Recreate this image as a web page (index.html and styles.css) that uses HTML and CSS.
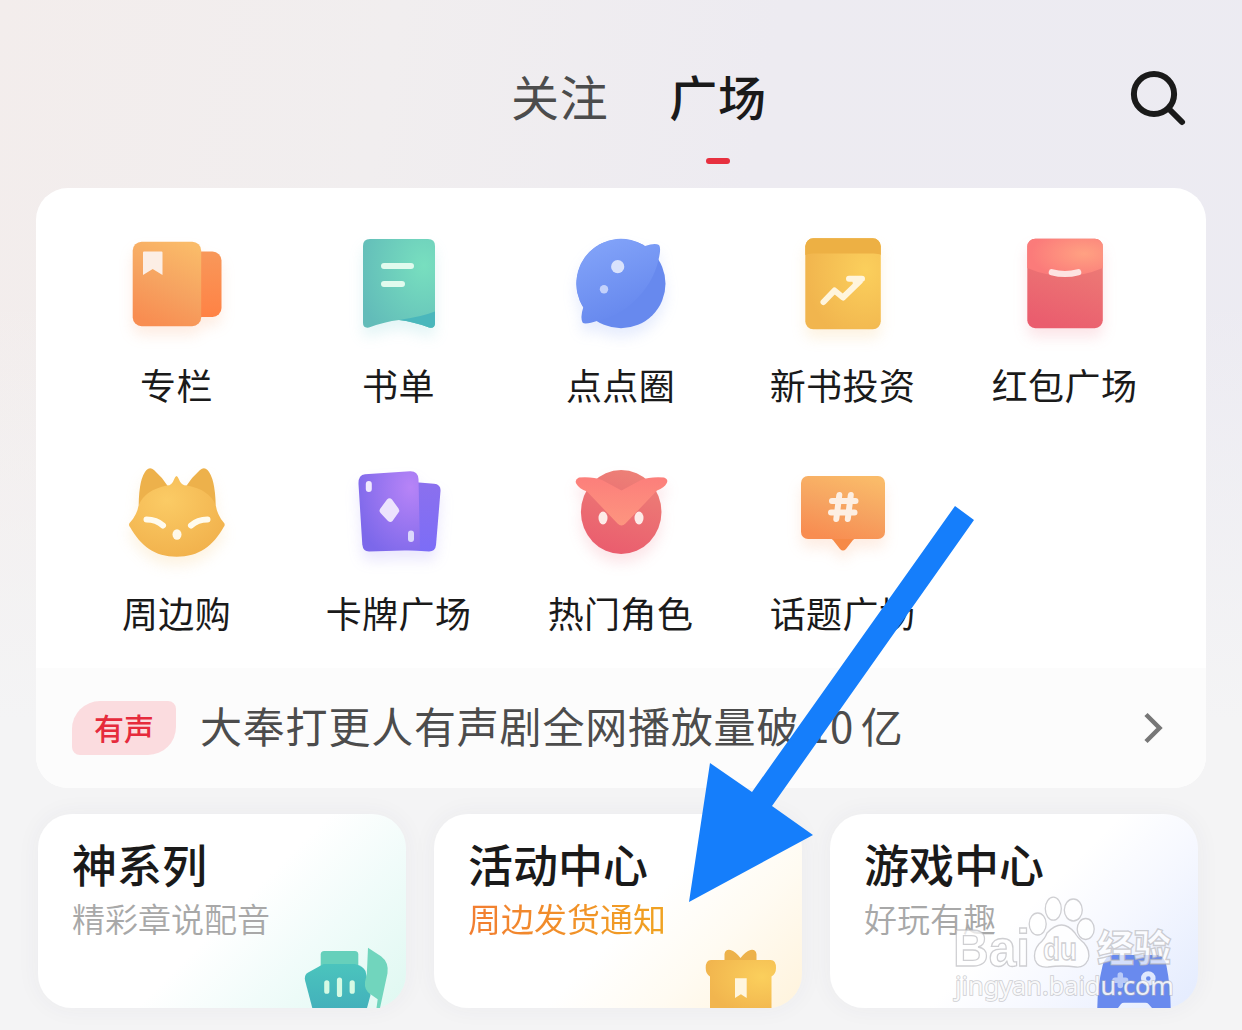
FILE: index.html
```html
<!DOCTYPE html>
<html lang="zh-CN">
<head>
    <meta charset="UTF-8">
    <meta name="viewport" content="width=device-width, initial-scale=1.0">
    <title>广场</title>
    <link rel="stylesheet" href="styles.css">
</head>
<body>
    <!-- shared gradients -->
    <svg class="defs" width="0" height="0" aria-hidden="true">
        <defs>
            <linearGradient id="orange" x1="0.75" y1="0" x2="0.35" y2="1"><stop offset="0" stop-color="#fabb69"/><stop offset="0.55" stop-color="#f6a260"/><stop offset="1" stop-color="#f88d51"/></linearGradient>
            <linearGradient id="orange-dark" x1="0" y1="0" x2="0" y2="1"><stop offset="0" stop-color="#f8985a"/><stop offset="1" stop-color="#ff8245"/></linearGradient>
            <radialGradient id="green" cx="0.85" cy="0.3" r="0.95"><stop offset="0" stop-color="#78dfbf"/><stop offset="1" stop-color="#62bcb9"/></radialGradient>
            <linearGradient id="teal" x1="0" y1="0" x2="0" y2="1"><stop offset="0" stop-color="#4bc4bd"/><stop offset="1" stop-color="#43b1bb"/></linearGradient>
            <linearGradient id="blue" x1="0.2" y1="0" x2="0.6" y2="1"><stop offset="0" stop-color="#83a4f9"/><stop offset="1" stop-color="#6486ed"/></linearGradient>
            <radialGradient id="yellow" cx="0.8" cy="0.35" r="0.8"><stop offset="0" stop-color="#fbcf5c"/><stop offset="1" stop-color="#f1b54e"/></radialGradient>
            <radialGradient id="fox" cx="0.4" cy="0.3" r="0.75"><stop offset="0" stop-color="#fbcb65"/><stop offset="1" stop-color="#f1b14c"/></radialGradient>
            <linearGradient id="red" x1="0.7" y1="0" x2="0.4" y2="1"><stop offset="0" stop-color="#ed8177"/><stop offset="1" stop-color="#ea5d6e"/></linearGradient>
            <radialGradient id="coral" cx="0.75" cy="0.4" r="0.7"><stop offset="0" stop-color="#ffa182"/><stop offset="1" stop-color="#fb7b7a"/></radialGradient>
            <linearGradient id="brow" x1="0" y1="0" x2="0" y2="1"><stop offset="0" stop-color="#fc7f7b"/><stop offset="1" stop-color="#fd957f"/></linearGradient>
            <radialGradient id="purple" cx="0.85" cy="0.2" r="0.95"><stop offset="0" stop-color="#b784f7"/><stop offset="1" stop-color="#7c68ea"/></radialGradient>
            <linearGradient id="violet" x1="0" y1="0" x2="0" y2="1"><stop offset="0" stop-color="#8b70ee"/><stop offset="1" stop-color="#7c6df7"/></linearGradient>
        </defs>
    </svg>

    <div class="page">
        <header class="header">
            <nav class="tabs">
                <span class="tab">关注</span>
                <span class="tab active">广场</span>
            </nav>
            <svg class="search" viewBox="0 0 60 60">
                <circle cx="26" cy="26" r="20.1" fill="none" stroke="#1a1a1a" stroke-width="6"/>
                <path d="M41 41L54 54" stroke="#1a1a1a" stroke-width="6" stroke-linecap="round"/>
            </svg>
        </header>

        <section class="panel">
            <div class="grid">
                <div class="item">
                    <svg class="icon glow-orange" viewBox="0 0 120 120">
                        <rect x="66" y="27.5" width="38.5" height="65.5" rx="9" fill="url(#orange-dark)"/>
                        <rect x="15.7" y="17.7" width="68.5" height="84.5" rx="9" fill="url(#orange)"/>
                        <path d="M26 28.5a1 1 0 0 1 1-1h17.5a1 1 0 0 1 1 1V51L35.7 45 26 51z" fill="#fceee5"/>
                    </svg>
                    <span class="label">专栏</span>
                </div>
                <div class="item">
                    <svg class="icon glow-green" viewBox="0 0 120 120">
                        <path d="M24 22q0-7 7-7h58q7 0 7 7v77q0 6-6 4.500Q74 97.500 60 96 46 97.500 30 103.500q-6 1-6-4.500z" fill="url(#green)"/>
                        <path d="M60 96Q82 93 96 87.500V99q0 6-6 4.500Q74 97.500 60 96z" fill="#4ab7bc"/>
                        <path d="M45 42h27M45 60h18" stroke="#e1fbee" stroke-width="6" stroke-linecap="round"/>
                    </svg>
                    <span class="label">书单</span>
                </div>
                <div class="item">
                    <svg class="icon glow-blue" viewBox="0 0 120 120">
                        <circle cx="60" cy="59.7" r="44.5" fill="#6789ee"/>
                        <path d="M84 22Q94 18.500 98 21 100.500 24 97.300 36.700C90 68 62 92 37.500 96.500Q24 101 21.500 98.500 19 93 22.300 83.300A44.500 44.500 0 0 1 84 22z" fill="url(#blue)"/>
                        <circle cx="56.7" cy="42.7" r="6.6" fill="#d9e2fc"/>
                        <circle cx="43" cy="65.3" r="4.2" fill="#c3d1fb"/>
                    </svg>
                    <span class="label">点点圈</span>
                </div>
                <div class="item">
                    <svg class="icon glow-yellow" viewBox="0 0 120 120">
                        <rect x="22.3" y="14.3" width="75.5" height="91" rx="8" fill="url(#yellow)"/>
                        <path d="M22.300 31v-8.700a8 8 0 0 1 8-8h59.500a8 8 0 0 1 8 8V31q-2-1.500-7-1.500H29.500q-5 0-7.200 1.500z" fill="#edb044"/>
                        <path d="M40.500 78l11-11.500 8.500 7L77 57M66 54.700h13" fill="none" stroke="#fff5dd" stroke-width="6" stroke-linecap="round" stroke-linejoin="round"/>
                        <path d="M69 55h12L71 66z" fill="#fff5dd"/>
                    </svg>
                    <span class="label">新书投资</span>
                </div>
                <div class="item">
                    <svg class="icon glow-red" viewBox="0 0 120 120">
                        <rect x="22.3" y="14.7" width="75.5" height="89.5" rx="8" fill="url(#red)"/>
                        <path d="M22.300 44V22.700a8 8 0 0 1 8-8h59.500a8 8 0 0 1 8 8V44Q60 60 22.300 44z" fill="url(#coral)"/>
                        <path d="M46.800 48.200q13.200 3.600 26.400 0" fill="none" stroke="#fde3e1" stroke-width="6.2" stroke-linecap="round"/>
                    </svg>
                    <span class="label">红包广场</span>
                </div>
                <div class="item">
                    <svg class="icon glow-yellow" viewBox="0 0 120 120">
                        <path d="M21.700 53Q22 26 29.500 18q3.500-3.500 7.500 0 8 7 13.700 16zM98.700 53Q98 26 90.500 18q-3.500-3.500-7.500 0-8 7-13.700 16z" fill="#edb14b"/>
                        <path d="M50 33.500q5 0 7-6 2.500-7 5 0 2 6 8 6 22 4 28.700 19.500 1.500 10 8 17.500 2 2 0 4.500C96 94 82 104.700 59.700 104.700S24 94 13 75q-2-2.500 0-4.500 7-7.500 8.700-17.500Q28 38 50 33.500z" fill="url(#fox)"/>
                        <path d="M29.500 67.500q10 0 16.500 6M90.500 67.500q-10 0-16.500 6" fill="none" stroke="#fffbee" stroke-width="6" stroke-linecap="round"/>
                        <ellipse cx="60" cy="82.5" rx="4.5" ry="5.2" fill="#fff8e8"/>
                    </svg>
                    <span class="label">周边购</span>
                </div>
                <div class="item">
                    <svg class="icon glow-purple" viewBox="0 0 120 120">
                        <path d="M74 30l21 1.700q7 .6 6.500 7.300L97 93q-.6 6.500-7 6.500L66 98z" fill="url(#violet)"/>
                        <path d="M26 22.300l45-3q8-.3 8.500 8L81 98l-51 1.500q-6 0-6.700-7L19.500 32q-.3-9 6.500-9.700z" fill="url(#purple)"/>
                        <rect x="26.8" y="29" width="6" height="11" rx="3" fill="#f0e9fe"/>
                        <rect x="69" y="78.5" width="6" height="11.5" rx="3" fill="#dcd8fc"/>
                        <path d="M48 47.500q2.500-2.500 5 0l6.500 9q1.500 2 0 4l-6 8.500q-2 2-4.500 0l-7.500-8q-2-2-.5-4z" fill="#ece3fd"/>
                    </svg>
                    <span class="label">卡牌广场</span>
                </div>
                <div class="item">
                    <svg class="icon glow-red" viewBox="0 0 120 120">
                        <ellipse cx="60.2" cy="60" rx="40.3" ry="42" fill="url(#red)"/>
                        <path d="M18 25.500q14-1 23 2.500l19.500 10.500L80 28q9-3.500 23-2.500 5 2 2.500 6-2 4-9.500 7L64.500 71.500q-4 4-8 0L26 39.500Q18 36.500 15.500 32q-2.500-4 2.500-6.500z" fill="url(#brow)"/>
                        <ellipse cx="42" cy="66" rx="4.5" ry="6.4" fill="#fdebe8"/>
                        <ellipse cx="78" cy="66" rx="4.5" ry="6.4" fill="#fdebe8"/>
                    </svg>
                    <span class="label">热门角色</span>
                </div>
                <div class="item">
                    <svg class="icon glow-orange" viewBox="0 0 120 120">
                        <path d="M46 85h28l-4 3-7 9q-3 3-6 0l-7-9z" fill="#f68a47"/>
                        <rect x="18" y="24" width="84" height="63" rx="7" fill="url(#orange)"/>
                        <path d="M49 49h23.500M48 60.500h23.500M56.300 43l-3 24M67.800 43l-3 24" stroke="#fdefe3" stroke-width="6" stroke-linecap="round"/>
                    </svg>
                    <span class="label">话题广场</span>
                </div>
            </div>
            <div class="notice">
                <span class="tag">有声</span>
                <span class="notice-text">大奉打更人有声剧全网播放量破 10 亿</span>
                <svg class="chevron" viewBox="0 0 24 36"><path d="M4 4.500L17.500 18 4 31.500" fill="none" stroke="#777" stroke-width="4.5"/></svg>
            </div>
        </section>

        <section class="cards">
            <div class="card mint">
                <h2>神系列</h2>
                <p>精彩章说配音</p>
                <svg class="card-icon" viewBox="0 0 90 64">
                    <path d="M16.700 26V10.500q0-3.500 3.500-3.500h30.600q3.500 0 3.500 3.500V26z" fill="#66d0bb"/>
                    <path d="M19.500 20H51q8 2 10.500 7l5 24L63 64H8.300L1.200 37q-1.500-6 3-8.500z" fill="url(#teal)"/>
                    <path d="M22.800 38.800v8.400M35.500 36v14.500M48.200 38.800v8.400" stroke="#d5fae4" stroke-width="5.2" stroke-linecap="round"/>
                    <path d="M64 3.700l13 8.500q8 6 6.500 17L76 64h-3.500l1.200-8.700-7.200-5Q60 46 61 38q2.500-8 2.300-18z" fill="#71d5bd"/>
                </svg>
            </div>
            <div class="card cream">
                <h2>活动中心</h2>
                <p class="hot">周边发货通知</p>
                <svg class="card-icon" viewBox="0 0 90 64">
                    <path d="M24.500 18V10q1-5 6-4 5 1.500 10 8 5-6.500 10-8 5-1 6 4v8z" fill="#edb24b"/>
                    <path d="M11 16h59.700q5.300 0 5.300 8 0 6-4.500 8.500V64H10V32.500Q5.700 30 5.700 24q0-8 5.300-8z" fill="url(#yellow)"/>
                    <path d="M35 34.300h11.700V54l-5.800-3.700L35 54z" fill="#fff6df"/>
                </svg>
            </div>
            <div class="card sky">
                <h2>游戏中心</h2>
                <p>好玩有趣</p>
                <svg class="card-icon" viewBox="0 0 90 64">
                    <path d="M17 11h44q8 1 9.500 11 4 20 4.200 42H56l-3.500-4q-1-1.300-3-1.300H28q-2 0-3 1.300L22 64H1.300Q1.500 42 6.500 22q2-10 10.500-11z" fill="#698aee"/>
                    <path d="M24.300 31v10.500M19 36.300h10.600" stroke="#b9caf8" stroke-width="5.5" stroke-linecap="round"/>
                    <circle cx="52.3" cy="34.5" r="4.8" fill="none" stroke="#dfe8fd" stroke-width="5"/>
                </svg>
            </div>
        </section>
    </div>

    <svg class="watermark" viewBox="0 0 240 130">
        <text x="9" y="86" textLength="77" lengthAdjust="spacingAndGlyphs" class="wm-bai">Bai</text>
        <ellipse cx="93.7" cy="44" rx="8.5" ry="11"/>
        <ellipse cx="109.3" cy="28.7" rx="8" ry="11.5"/>
        <ellipse cx="129.3" cy="30" rx="9" ry="11"/>
        <ellipse cx="141.7" cy="49" rx="8.5" ry="10.5"/>
        <path d="M103 53q15-16 28 0 2 4 9 10 7 8 4 17-4 8-12 7-14-2-28 0-10 1-13-7-2-9 4-16 6-5 8-11z"/>
        <text x="99" y="80" textLength="34" lengthAdjust="spacingAndGlyphs" class="wm-du">du</text>
        <text x="153" y="82" class="wm-jy">经验</text>
        <text x="11" y="115" textLength="219" lengthAdjust="spacingAndGlyphs" class="wm-url">jingyan.baidu.com</text>
    </svg>

    <svg class="arrow" viewBox="0 0 130 400">
        <path d="M267 6L286 20 84 306 125 335 1 402 22 263 64 292z" fill="#157efb"/>
    </svg>
</body>
</html>
```
FILE: styles.css
```css
* {
    box-sizing: border-box;
}

body {
    margin: 0;
    height: 1030px;
    overflow: hidden;
    position: relative;
    font-family: "Noto Sans CJK SC", sans-serif;
    color: #1a1a1a;
    background:
        linear-gradient(to bottom, rgba(244, 244, 245, 0) 300px, #f4f4f5 720px),
        linear-gradient(100deg, #f3edec 0%, #f1eeef 28%, #edebf1 55%, #ecebf2 100%);
}

.defs {
    position: absolute;
}

.page {
    padding: 0 36px;
}

.header {
    height: 188px;
    display: flex;
    justify-content: center;
    position: relative;
}

.tabs {
    display: flex;
    gap: 60px;
    padding: 60px 0 0 36px;
}

.tab {
    width: 98px;
    height: 104px;
    font-size: 48px;
    line-height: 70px;
    letter-spacing: 0.8px;
    color: #4c4c4c;
    white-space: nowrap;
}

.tab.active {
    display: flex;
    flex-direction: column;
    justify-content: space-between;
    align-items: center;
    color: #1a1a1a;
    font-weight: 500;
}

.tab.active::after {
    content: "";
    width: 24px;
    height: 6px;
    border-radius: 3px;
    background: #e7303f;
}

.search {
    position: absolute;
    right: 18px;
    top: 68px;
    width: 60px;
    height: 60px;
}

.panel {
    height: 600px;
    border-radius: 32px;
    overflow: hidden;
    background: #fff;
}

.grid {
    height: 480px;
    padding: 36px 30px 0;
    display: grid;
    grid-template-columns: repeat(5, 222px);
    grid-template-rows: 228px 228px;
}

.item {
    display: flex;
    flex-direction: column;
    align-items: center;
}

.icon {
    width: 120px;
    height: 120px;
    overflow: visible;
}

.glow-orange { filter: drop-shadow(0 9px 7px rgba(250, 140, 80, 0.16)); }
.glow-green { filter: drop-shadow(0 9px 7px rgba(80, 190, 200, 0.16)); }
.glow-blue { filter: drop-shadow(0 9px 7px rgba(100, 135, 240, 0.16)); }
.glow-yellow { filter: drop-shadow(0 9px 7px rgba(245, 180, 75, 0.16)); }
.glow-red { filter: drop-shadow(0 9px 7px rgba(235, 95, 110, 0.16)); }
.glow-purple { filter: drop-shadow(0 9px 7px rgba(125, 105, 240, 0.16)); }

.label {
    margin-top: 14px;
    padding-right: 1px;
    font-size: 36px;
    line-height: 52px;
    letter-spacing: 0.4px;
    white-space: nowrap;
}

.notice {
    height: 120px;
    padding: 0 40px 0 36px;
    display: flex;
    align-items: center;
    background: #fcfcfc;
}

.tag {
    width: 104px;
    height: 54px;
    border-radius: 28px 8px 28px 8px;
    background: #fbdcdf;
    color: #e62b3c;
    font-size: 30px;
    font-weight: 500;
    line-height: 52px;
    text-align: center;
}

.notice-text {
    flex: 1;
    margin-left: 24px;
    padding-bottom: 6px;
    font-size: 42px;
    line-height: 60px;
    letter-spacing: 0.8px;
    word-spacing: -3.5px;
    color: #4c4c4c;
    white-space: nowrap;
}

.chevron {
    width: 24px;
    height: 36px;
}

.cards {
    display: flex;
    gap: 28px;
    padding: 26px 8px 0 2px;
}

.card {
    position: relative;
    width: 368px;
    height: 194px;
    flex: none;
    padding: 17px 34px;
    border-radius: 34px;
    box-shadow: 0 0 24px rgba(60, 60, 90, 0.05);
}

.mint { background: linear-gradient(135deg, #fff 52%, #f1fcfa 72%, #dff8f1 100%); }
.cream { background: linear-gradient(135deg, #fff 54%, #fffbf2 74%, #fff3dc 100%); }
.sky { background: linear-gradient(135deg, #fff 52%, #f6f8ff 70%, #e3ebfe 100%); }

.card h2 {
    margin: 0;
    font-size: 45px;
    font-weight: 500;
    line-height: 66px;
}

.card p {
    margin: 0;
    font-size: 33px;
    font-weight: 350;
    line-height: 43px;
    color: #a8a8a8;
}

.card .hot {
    width: max-content;
    font-weight: 400;
    background: linear-gradient(to right, #f27d31, #f0a321);
    -webkit-background-clip: text;
    background-clip: text;
    color: transparent;
}

.card-icon {
    position: absolute;
    right: 12px;
    bottom: 0;
    width: 90px;
    height: 64px;
}

.watermark {
    position: absolute;
    left: 944px;
    top: 880px;
    width: 240px;
    height: 130px;
    fill: rgba(255, 255, 255, 0.72);
    stroke: rgba(175, 175, 180, 0.6);
    stroke-width: 1.3px;
    font-family: "Liberation Sans", "Noto Sans CJK SC", sans-serif;
}

.wm-bai { font-size: 52px; font-weight: bold; }
.wm-du { font-size: 31px; font-weight: bold; }
.wm-jy { font-size: 37px; font-weight: 900; }

.wm-url {
    font-size: 26px;
    font-family: "Noto Sans", sans-serif;
    fill: rgba(255, 255, 255, 0.85);
    stroke-width: 1.6px;
    paint-order: stroke;
}

.arrow {
    position: absolute;
    left: 688px;
    top: 500px;
    width: 130px;
    height: 400px;
    overflow: visible;
    pointer-events: none;
}
```
